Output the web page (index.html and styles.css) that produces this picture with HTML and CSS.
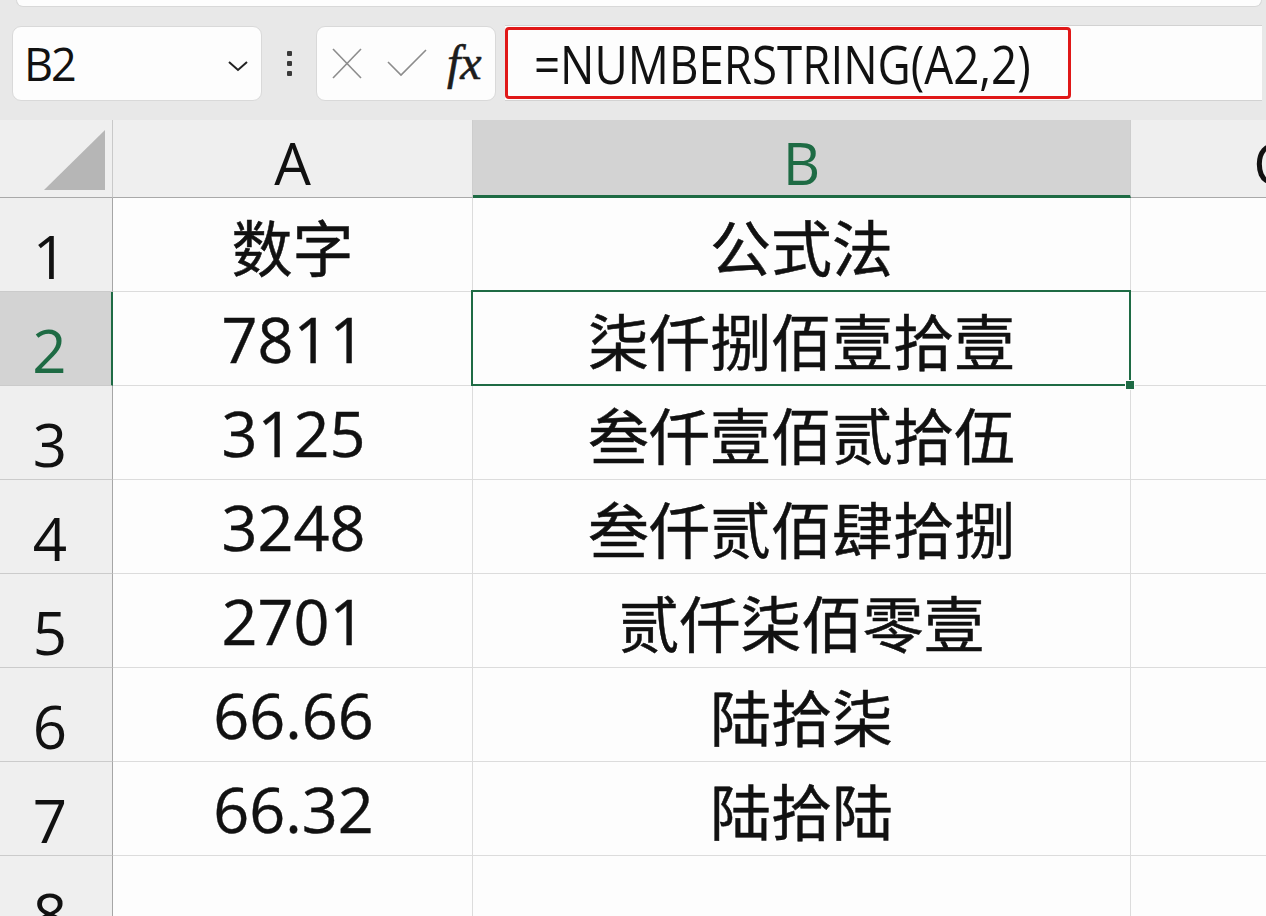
FILE: index.html
```html
<!DOCTYPE html>
<html lang="zh">
<head>
<meta charset="utf-8">
<title>NUMBERSTRING</title>
<link rel="stylesheet" href="styles.css">
</head>
<body>
<div class="app">
  <div class="toolbar">
    <div class="top-strip"></div>
    <div class="bar">
      <div class="namebox">
        <span class="name">B2</span>
        <svg class="chev" width="22" height="12" viewBox="0 0 22 12"><polyline points="2,2 11,10 20,2" fill="none" stroke="#222" stroke-width="2"/></svg>
      </div>
      <div class="dots"><i></i><i></i><i></i></div>
      <div class="fxbox">
        <svg class="fxicons" width="120" height="75" viewBox="0 0 120 75">
          <line x1="16" y1="23" x2="44" y2="52" stroke="#8c8c8c" stroke-width="1.6"/>
          <line x1="44" y1="23" x2="16" y2="52" stroke="#8c8c8c" stroke-width="1.6"/>
          <polyline points="71,36 84,49 109,24" fill="none" stroke="#8c8c8c" stroke-width="1.6"/>
        </svg>
        <span class="fx">fx</span>
      </div>
      <div class="formula">
        <div class="redbox"><span class="ftext">=NUMBERSTRING(A2,2)</span></div>
      </div>
    </div>
  </div>
  <div class="sheet">
    <div class="corner"><svg width="113" height="78" viewBox="0 0 113 78"><polygon points="44,70 105,70 105,10" fill="#b6b6b6"/></svg></div>
    <div class="ch">A</div>
    <div class="ch sel">B</div>
    <div class="ch">C</div>

    <div class="rh">1</div>
    <div class="c cjk">数字</div>
    <div class="c cjk">公式法</div>
    <div class="c"></div>

    <div class="rh sel">2</div>
    <div class="c num">7811</div>
    <div class="c cjk active">柒仟捌佰壹拾壹<span class="handle"></span></div>
    <div class="c"></div>

    <div class="rh">3</div>
    <div class="c num">3125</div>
    <div class="c cjk">叁仟壹佰贰拾伍</div>
    <div class="c"></div>

    <div class="rh">4</div>
    <div class="c num">3248</div>
    <div class="c cjk">叁仟贰佰肆拾捌</div>
    <div class="c"></div>

    <div class="rh">5</div>
    <div class="c num">2701</div>
    <div class="c cjk">贰仟柒佰零壹</div>
    <div class="c"></div>

    <div class="rh">6</div>
    <div class="c num">66.66</div>
    <div class="c cjk">陆拾柒</div>
    <div class="c"></div>

    <div class="rh">7</div>
    <div class="c num">66.32</div>
    <div class="c cjk">陆拾陆</div>
    <div class="c"></div>

    <div class="rh">8</div>
    <div class="c"></div>
    <div class="c"></div>
    <div class="c"></div>
  </div>
</div>
</body>
</html>
```
FILE: styles.css
```css
html, body {
  margin: 0;
  padding: 0;
  width: 1266px;
  height: 916px;
  overflow: hidden;
  background: #fdfdfd;
}
.app {
  font-family: "Open Sans", "Noto Sans CJK SC", sans-serif;
  color: #111;
}
.toolbar {
  height: 120px;
  background: #e8e8e8;
  box-sizing: border-box;
}
.top-strip {
  height: 6px;
  margin-left: 16px;
  margin-right: 4px;
  background: #fdfdfd;
  border: 1px solid #d8d8d8;
  border-top: none;
  border-bottom-left-radius: 10px;
  border-bottom-right-radius: 10px;
}
.bar {
  display: flex;
  align-items: flex-start;
  padding-top: 19px;
  padding-left: 12px;
}
.namebox {
  width: 250px;
  height: 75px;
  box-sizing: border-box;
  background: #fdfdfd;
  border: 1px solid #d9d9d9;
  border-radius: 9px;
  display: flex;
  align-items: center;
  justify-content: space-between;
  padding: 0 12px 0 11px;
}
.name {
  font-size: 45px;
  line-height: 1;
  letter-spacing: -2px;
  color: #111;
}
.chev { margin-top: 4px; }
.dots {
  width: 54px;
  height: 75px;
  display: flex;
  flex-direction: column;
  align-items: center;
  justify-content: center;
  gap: 5px;
}
.dots i {
  display: block;
  width: 5px;
  height: 5px;
  border-radius: 1px;
  background: #3a3a3a;
}
.fxbox {
  width: 180px;
  height: 75px;
  box-sizing: border-box;
  background: #fdfdfd;
  border: 1px solid #d9d9d9;
  border-radius: 9px;
  display: flex;
  align-items: center;
}
.fxicons { display: block; }
.fx {
  font-family: "Liberation Serif", "DejaVu Serif", serif;
  font-style: italic;
  font-size: 48px;
  line-height: 1;
  margin-left: 10px;
  margin-top: -2px;
  color: #1c1c1c;
  -webkit-text-stroke: 0.6px #1c1c1c;
}
.formula {
  margin-left: 9px;
  width: 757px;
  height: 76px;
  margin-top: -1px;
  box-sizing: border-box;
  background: #fdfdfd;
  border-top: 1px solid #d2d2d2;
  border-bottom: 1px solid #d2d2d2;
  padding-top: 1px;
}
.redbox {
  width: 566px;
  height: 72px;
  box-sizing: border-box;
  border: 3px solid #e01818;
  border-radius: 4px;
  display: flex;
  align-items: center;
  padding-left: 26px;
  overflow: visible;
}
.ftext {
  display: inline-block;
  font-size: 53px;
  line-height: 1;
  white-space: nowrap;
  transform: scaleX(0.862);
  transform-origin: left center;
  color: #111;
}
.sheet {
  display: grid;
  grid-template-columns: 113px 360px 658px 282px;
  grid-template-rows: 78px;
  grid-auto-rows: 94px;
}
.corner {
  background: #efefef;
  border-right: 1px solid #c9c9c9;
  border-bottom: 1px solid #a9a9a9;
  box-sizing: border-box;
}
.corner svg { display: block; }
.ch {
  background: #efefef;
  box-sizing: border-box;
  border-right: 1px solid #cdcdcd;
  border-bottom: 1px solid #a9a9a9;
  display: flex;
  align-items: center;
  justify-content: center;
  font-size: 58px;
  line-height: 1;
  padding-top: 8px;
  color: #111;
}
.ch.sel {
  background: #d3d3d3;
  color: #1e6b44;
  border-bottom: 3px solid #1e6b44;
  padding-top: 10px;
}
.rh {
  background: #efefef;
  box-sizing: border-box;
  border-right: 1px solid #a6a6a6;
  border-bottom: 1px solid #cbcbcb;
  display: flex;
  align-items: center;
  justify-content: center;
  font-size: 60px;
  line-height: 1;
  padding-top: 22px;
  padding-right: 12px;
  color: #111;
}
.rh.sel {
  background: #d3d3d3;
  color: #1e6b44;
  border-right: 2px solid #1e6b44;
}
.c {
  position: relative;
  box-sizing: border-box;
  border-right: 1px solid #dcdcdc;
  border-bottom: 1px solid #dcdcdc;
  display: flex;
  align-items: center;
  justify-content: center;
  background: #fdfdfd;
  line-height: 1;
  white-space: nowrap;
}
.num {
  font-size: 63px;
  padding-left: 2px;
  -webkit-text-stroke: 0.4px #111;
}
.cjk {
  font-family: "Noto Sans CJK SC", sans-serif;
  font-size: 61px;
  padding-top: 2px;
  -webkit-text-stroke: 0.5px #111;
}
.active::after {
  content: "";
  position: absolute;
  left: -2px;
  top: -2px;
  right: -1px;
  bottom: -1px;
  border: 2px solid #1e6b44;
  pointer-events: none;
}
.handle {
  position: absolute;
  right: -5px;
  bottom: -5px;
  width: 8px;
  height: 8px;
  background: #1e6b44;
  border: 1px solid #fdfdfd;
  z-index: 2;
}
```
